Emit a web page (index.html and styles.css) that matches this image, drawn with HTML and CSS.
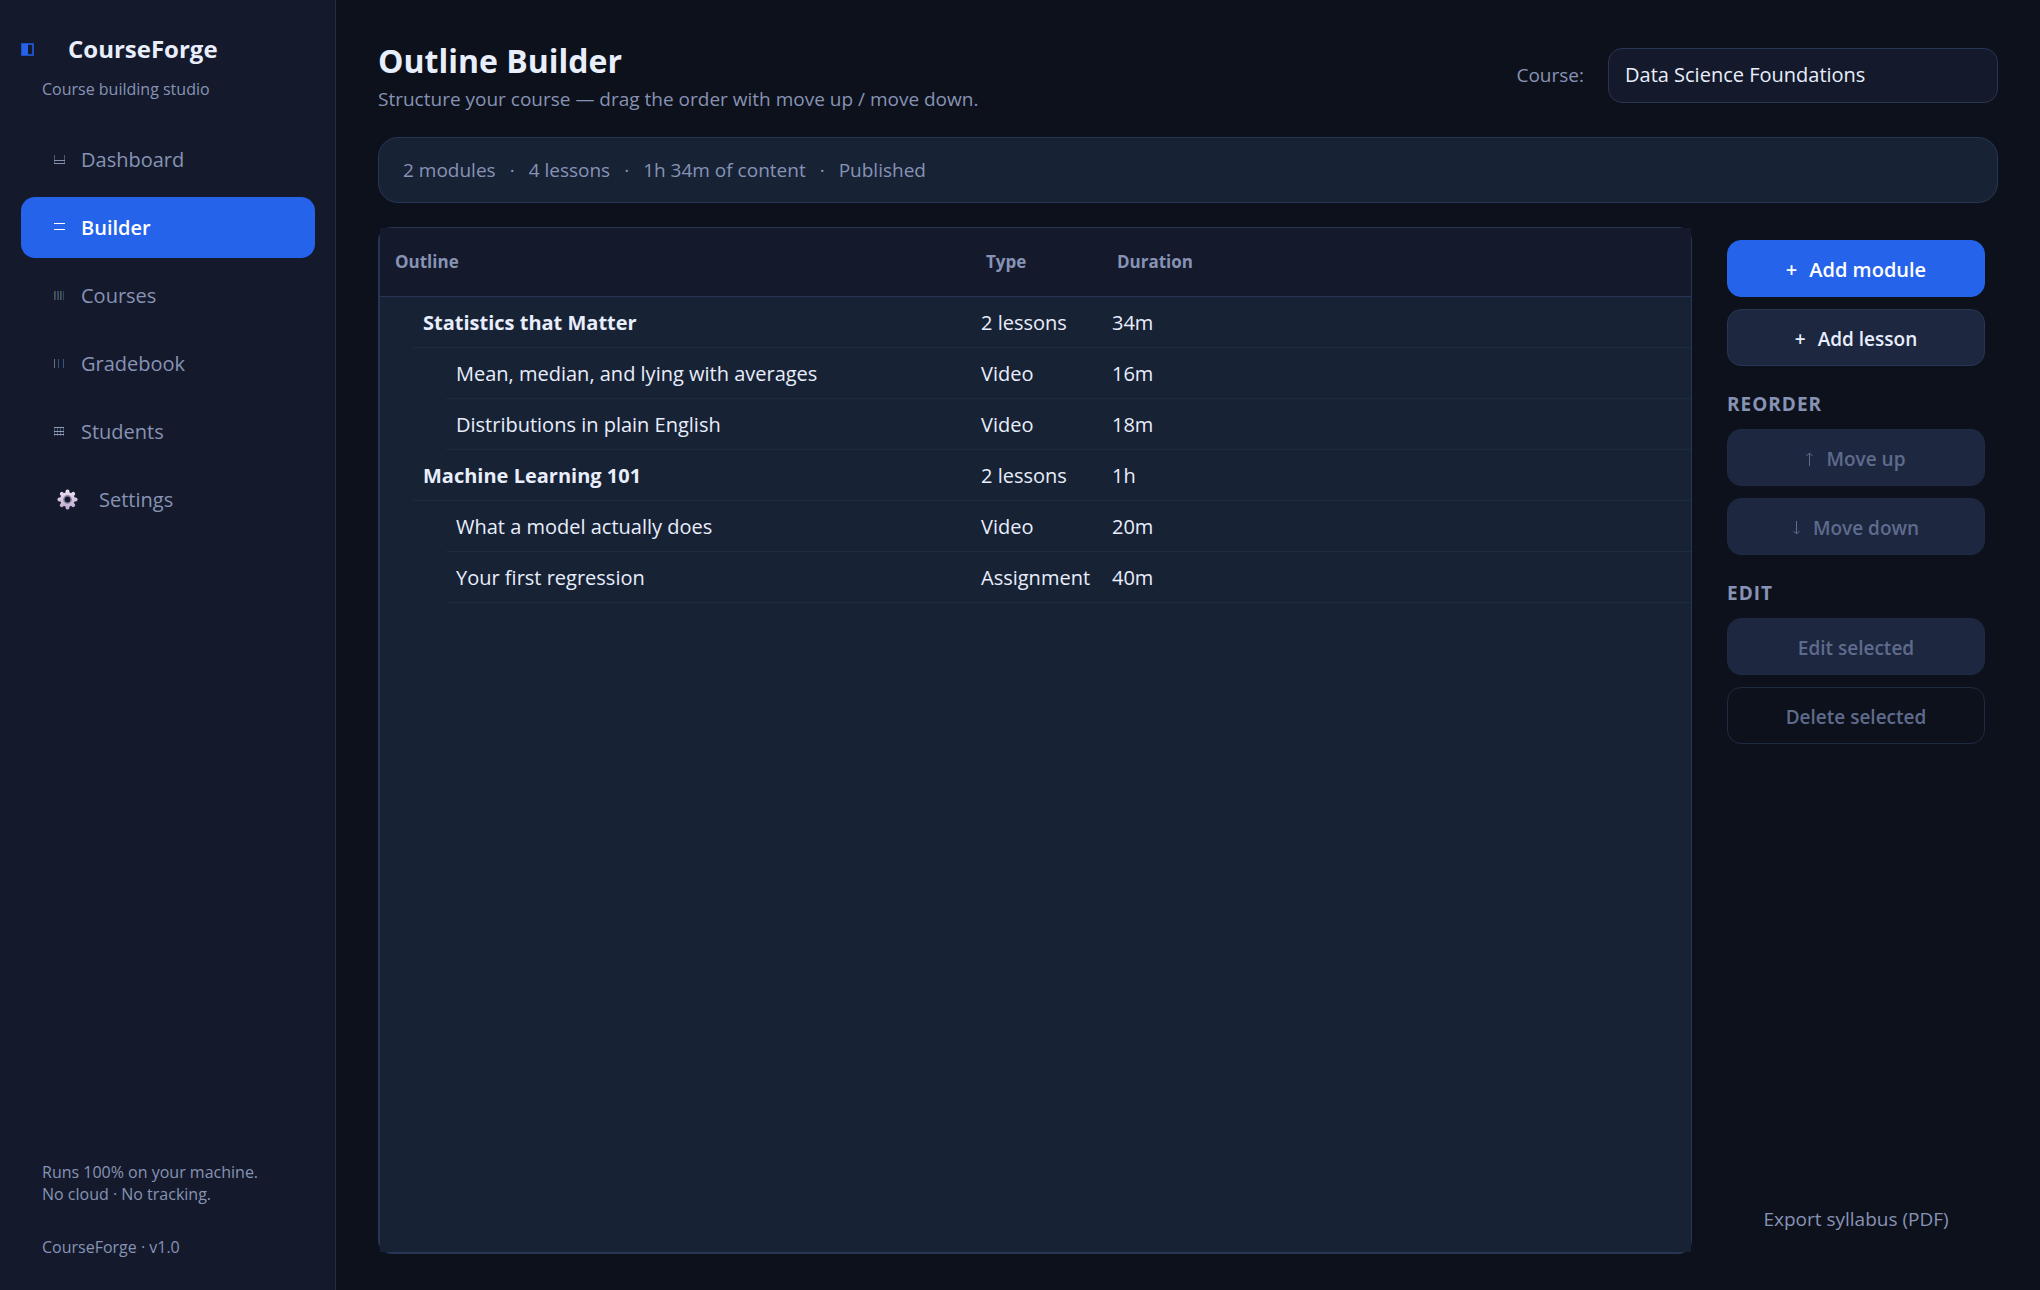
FILE: index.html
```html
<!DOCTYPE html>
<html lang="en">
<head>
  <meta charset="UTF-8">
  <meta name="viewport" content="width=device-width, initial-scale=1.0">
  <title>CourseForge - Outline Builder</title>
  <link rel="stylesheet" href="styles.css">
</head>
<body>
  <aside class="sidebar">
    <div class="brand">
      <svg class="brand-icon" width="13" height="13" viewBox="0 0 13 13" aria-hidden="true">
        <rect x="1" y="1" width="11" height="11" fill="none" stroke="#1d4fc4" stroke-width="2"/>
        <rect x="1" y="1" width="6" height="11" fill="#2563eb"/>
      </svg>
      <span class="brand-name">CourseForge</span>
    </div>
    <p class="tagline">Course building studio</p>

    <nav class="nav">
      <a href="#dashboard">
        <svg width="11" height="11" viewBox="0 0 11 11" aria-hidden="true">
          <path d="M0.5 1v9M10.5 1v9" stroke="#4f5a75" fill="none"/>
          <path d="M0 6.5h11M0 9.5h11" stroke="#8592ae" fill="none"/>
        </svg>
        Dashboard
      </a>
      <a href="#builder" class="active" aria-current="page">
        <svg width="11" height="11" viewBox="0 0 11 11" aria-hidden="true">
          <path d="M0 1.5h11M0 7.5h11" stroke="#fff" fill="none"/>
        </svg>
        Builder
      </a>
      <a href="#courses">
        <svg width="11" height="11" viewBox="0 0 11 11" aria-hidden="true">
          <path d="M0.5 1v9M6.5 1v9" stroke="#4d5450"/>
          <path d="M1.5 1v9M7.5 1v9" stroke="#3a4a40"/>
          <path d="M3.5 1v9M9.5 1v9" stroke="#3f3f78"/>
          <path d="M4.5 1v9" stroke="#1f5a68"/>
        </svg>
        Courses
      </a>
      <a href="#gradebook">
        <svg width="11" height="11" viewBox="0 0 11 11" aria-hidden="true">
          <path d="M0.5 1v9" stroke="#6b7180"/>
          <path d="M4.5 1v9" stroke="#2a5a72"/>
          <path d="M9.5 1v9" stroke="#3a5290"/>
        </svg>
        Gradebook
      </a>
      <a href="#students">
        <svg width="11" height="11" viewBox="0 0 11 11" aria-hidden="true">
          <path d="M0.5 1v9M3.5 1v9M6.5 1v9M9.5 1v9" stroke="#465272"/>
          <path d="M0 1.5h10M0 5.5h10M0 8.5h10" stroke="#8e9bb3"/>
        </svg>
        Students
      </a>
      <a href="#settings" class="nav-settings">
        <svg width="21" height="21" viewBox="0 0 21 21" aria-hidden="true">
          <defs>
            <linearGradient id="gear" gradientUnits="userSpaceOnUse" x1="0" y1="0" x2="0" y2="21">
              <stop offset="0" stop-color="#efe6f4"/>
              <stop offset="1" stop-color="#bba6cd"/>
            </linearGradient>
          </defs>
          <g stroke="url(#gear)" stroke-width="4" stroke-linecap="round">
            <path d="M10.5 2.4v16.2M2.4 10.5h16.2"/>
            <path d="M4.8 4.8l11.4 11.4M16.2 4.8L4.8 16.2"/>
          </g>
          <circle cx="10.5" cy="10.5" r="7.3" fill="url(#gear)"/>
          <circle cx="10.5" cy="10.5" r="4.4" fill="#8f84a3"/>
          <circle cx="10.5" cy="10.5" r="2.9" fill="#141a2b"/>
        </svg>
        Settings
      </a>
    </nav>

    <footer class="sidebar-footer">
      <p>Runs 100% on your machine.<br>No cloud · No tracking.</p>
      <p>CourseForge · v1.0</p>
    </footer>
  </aside>

  <main class="main">
    <header class="page-header">
      <div>
        <h1>Outline Builder</h1>
        <p class="subtitle">Structure your course — drag the order with move up / move down.</p>
      </div>
      <div class="course-picker">
        <label for="course">Course:</label>
        <select id="course">
          <option>Data Science Foundations</option>
        </select>
      </div>
    </header>

    <section class="stats">
      <span>2 modules</span>
      <span>·</span>
      <span>4 lessons</span>
      <span>·</span>
      <span>1h 34m of content</span>
      <span>·</span>
      <span>Published</span>
    </section>

    <div class="workspace">
      <section class="outline">
        <div class="outline-body">
          <table>
            <thead>
              <tr>
                <th class="col-outline">Outline</th>
                <th class="col-type">Type</th>
                <th>Duration</th>
              </tr>
            </thead>
            <tbody>
              <tr class="module">
                <td><div>Statistics that Matter</div></td>
                <td><div>2 lessons</div></td>
                <td><div>34m</div></td>
              </tr>
              <tr class="lesson">
                <td><div>Mean, median, and lying with averages</div></td>
                <td><div>Video</div></td>
                <td><div>16m</div></td>
              </tr>
              <tr class="lesson">
                <td><div>Distributions in plain English</div></td>
                <td><div>Video</div></td>
                <td><div>18m</div></td>
              </tr>
              <tr class="module">
                <td><div>Machine Learning 101</div></td>
                <td><div>2 lessons</div></td>
                <td><div>1h</div></td>
              </tr>
              <tr class="lesson">
                <td><div>What a model actually does</div></td>
                <td><div>Video</div></td>
                <td><div>20m</div></td>
              </tr>
              <tr class="lesson">
                <td><div>Your first regression</div></td>
                <td><div>Assignment</div></td>
                <td><div>40m</div></td>
              </tr>
            </tbody>
          </table>
        </div>
      </section>

      <aside class="actions">
        <button type="button" class="btn btn-primary"><span>+</span>Add module</button>
        <button type="button" class="btn"><span>+</span>Add lesson</button>

        <h2>REORDER</h2>
        <button type="button" class="btn" disabled>
          <svg width="8" height="14" viewBox="0 0 8 14" aria-hidden="true"><path d="M3.5 14V1M0.5 4l3-3 3 3" fill="none" stroke="currentColor"/></svg>
          Move up
        </button>
        <button type="button" class="btn" disabled>
          <svg width="8" height="14" viewBox="0 0 8 14" aria-hidden="true"><path d="M3.5 0v13M0.5 10l3 3 3-3" fill="none" stroke="currentColor"/></svg>
          Move down
        </button>

        <h2>EDIT</h2>
        <button type="button" class="btn" disabled>Edit selected</button>
        <button type="button" class="btn btn-outline" disabled>Delete selected</button>

        <button type="button" class="btn-link">Export syllabus (PDF)</button>
      </aside>
    </div>
  </main>
</body>
</html>
```
FILE: styles.css
```css
* {
  box-sizing: border-box;
}
body {
  margin: 0;
  min-height: 100vh;
  display: flex;
  font-family: "Segoe UI", "Open Sans", "Noto Sans", sans-serif;
  font-size: 19px;
  line-height: 26px;
  background: #0d111b;
  color: #e8eefc;
}
h1, h2, p {
  margin: 0;
}

/* Sidebar */
.sidebar {
  width: 336px;
  flex-shrink: 0;
  display: flex;
  flex-direction: column;
  padding: 32px 20px 32px 21px;
  background: #141a2b;
  border-right: 1px solid #202c48;
}
.brand {
  display: flex;
  align-items: center;
  gap: 34px;
}
.brand-name {
  font-size: 24px;
  font-weight: 700;
  line-height: 34px;
}
.tagline {
  margin: 12px 0 29px;
  padding-left: 21px;
  font-size: 16px;
  line-height: 22px;
  color: #8793b5;
}
.nav {
  display: flex;
  flex-direction: column;
  gap: 7px;
}
.nav a {
  display: flex;
  align-items: center;
  gap: 16px;
  height: 61px;
  padding: 0 33px;
  border-radius: 14px;
  font-size: 20px;
  color: #8793b5;
  text-decoration: none;
}
.nav a.active {
  background: #2563eb;
  color: #fff;
  font-weight: 600;
}
.nav a.nav-settings {
  gap: 21px;
  padding-left: 36px;
}
.sidebar-footer {
  display: flex;
  flex-direction: column;
  gap: 31px;
  margin-top: auto;
  padding-left: 21px;
  font-size: 16px;
  line-height: 22px;
  color: #8793b5;
}

/* Main area */
.main {
  flex: 1;
  min-width: 0;
  display: flex;
  flex-direction: column;
  padding: 37px 42px 36px;
}
.page-header {
  display: flex;
  justify-content: space-between;
  align-items: center;
  margin-bottom: 24px;
}
.page-header h1 {
  font-size: 32px;
  line-height: 48px;
}
.subtitle {
  line-height: 28px;
  color: #8793b5;
}
.course-picker {
  display: flex;
  align-items: center;
  gap: 24px;
  color: #8793b5;
}
.course-picker select {
  appearance: none;
  width: 390px;
  height: 55px;
  padding: 0 16px;
  border: 1px solid #293554;
  border-radius: 14px;
  background: #141a2b;
  color: #e8eefc;
  font: inherit;
  font-size: 20px;
}
.stats {
  display: flex;
  align-items: center;
  gap: 14px;
  height: 66px;
  margin-bottom: 24px;
  padding: 0 24px;
  border: 1px solid #293554;
  border-radius: 20px;
  background: #182235;
  color: #8793b5;
}
.workspace {
  flex: 1;
  display: flex;
  gap: 22px;
}

/* Outline table */
.outline {
  flex: 1;
  display: flex;
  border: 1px solid #293554;
  border-width: 1px 1px 2px 2px;
  border-radius: 14px;
}
.outline-body {
  flex: 1;
  background: #182235;
}
.outline table {
  width: 100%;
  border-collapse: collapse;
  table-layout: fixed;
}
.outline th {
  height: 68px;
  padding: 1px 15px 0;
  border-bottom: 1px solid #293554;
  background: #141a2b;
  color: #8793b5;
  font-size: 17px;
  text-align: left;
}
.col-outline {
  width: 591px;
}
.col-type {
  width: 131px;
}
.outline td {
  padding: 0;
  font-size: 20px;
}
.outline td div {
  height: 51px;
  padding-left: 10px;
  border-bottom: 1px solid #1e2942;
  line-height: 52px;
  white-space: nowrap;
}
.module td:first-child {
  padding-left: 33px;
  font-weight: 700;
}
.lesson td:first-child {
  padding-left: 66px;
}

/* Right hand actions */
.actions {
  width: 284px;
  display: flex;
  flex-direction: column;
  gap: 12px;
  padding: 13px;
}
.actions h2 {
  margin-top: 12px;
  padding-top: 2px;
  font-size: 19px;
  line-height: 25px;
  letter-spacing: 1px;
  color: #8793b5;
}
.btn {
  display: flex;
  align-items: center;
  justify-content: center;
  gap: 12px;
  height: 57px;
  padding: 2px 0 0;
  border: 1px solid #293554;
  border-radius: 14px;
  background: #1d2740;
  color: #e8eefc;
  font: inherit;
  font-weight: 600;
}
.btn-primary {
  border-color: #2563eb;
  background: #2563eb;
  color: #fff;
  font-size: 20px;
}
.btn:disabled {
  border-color: #1e2942;
  color: #5f6b8c;
}
.btn-outline {
  background: transparent;
}
.btn-link {
  margin-top: auto;
  padding: 7px 7px 9px;
  border: none;
  background: none;
  color: #8793b5;
  font: inherit;
}
```
